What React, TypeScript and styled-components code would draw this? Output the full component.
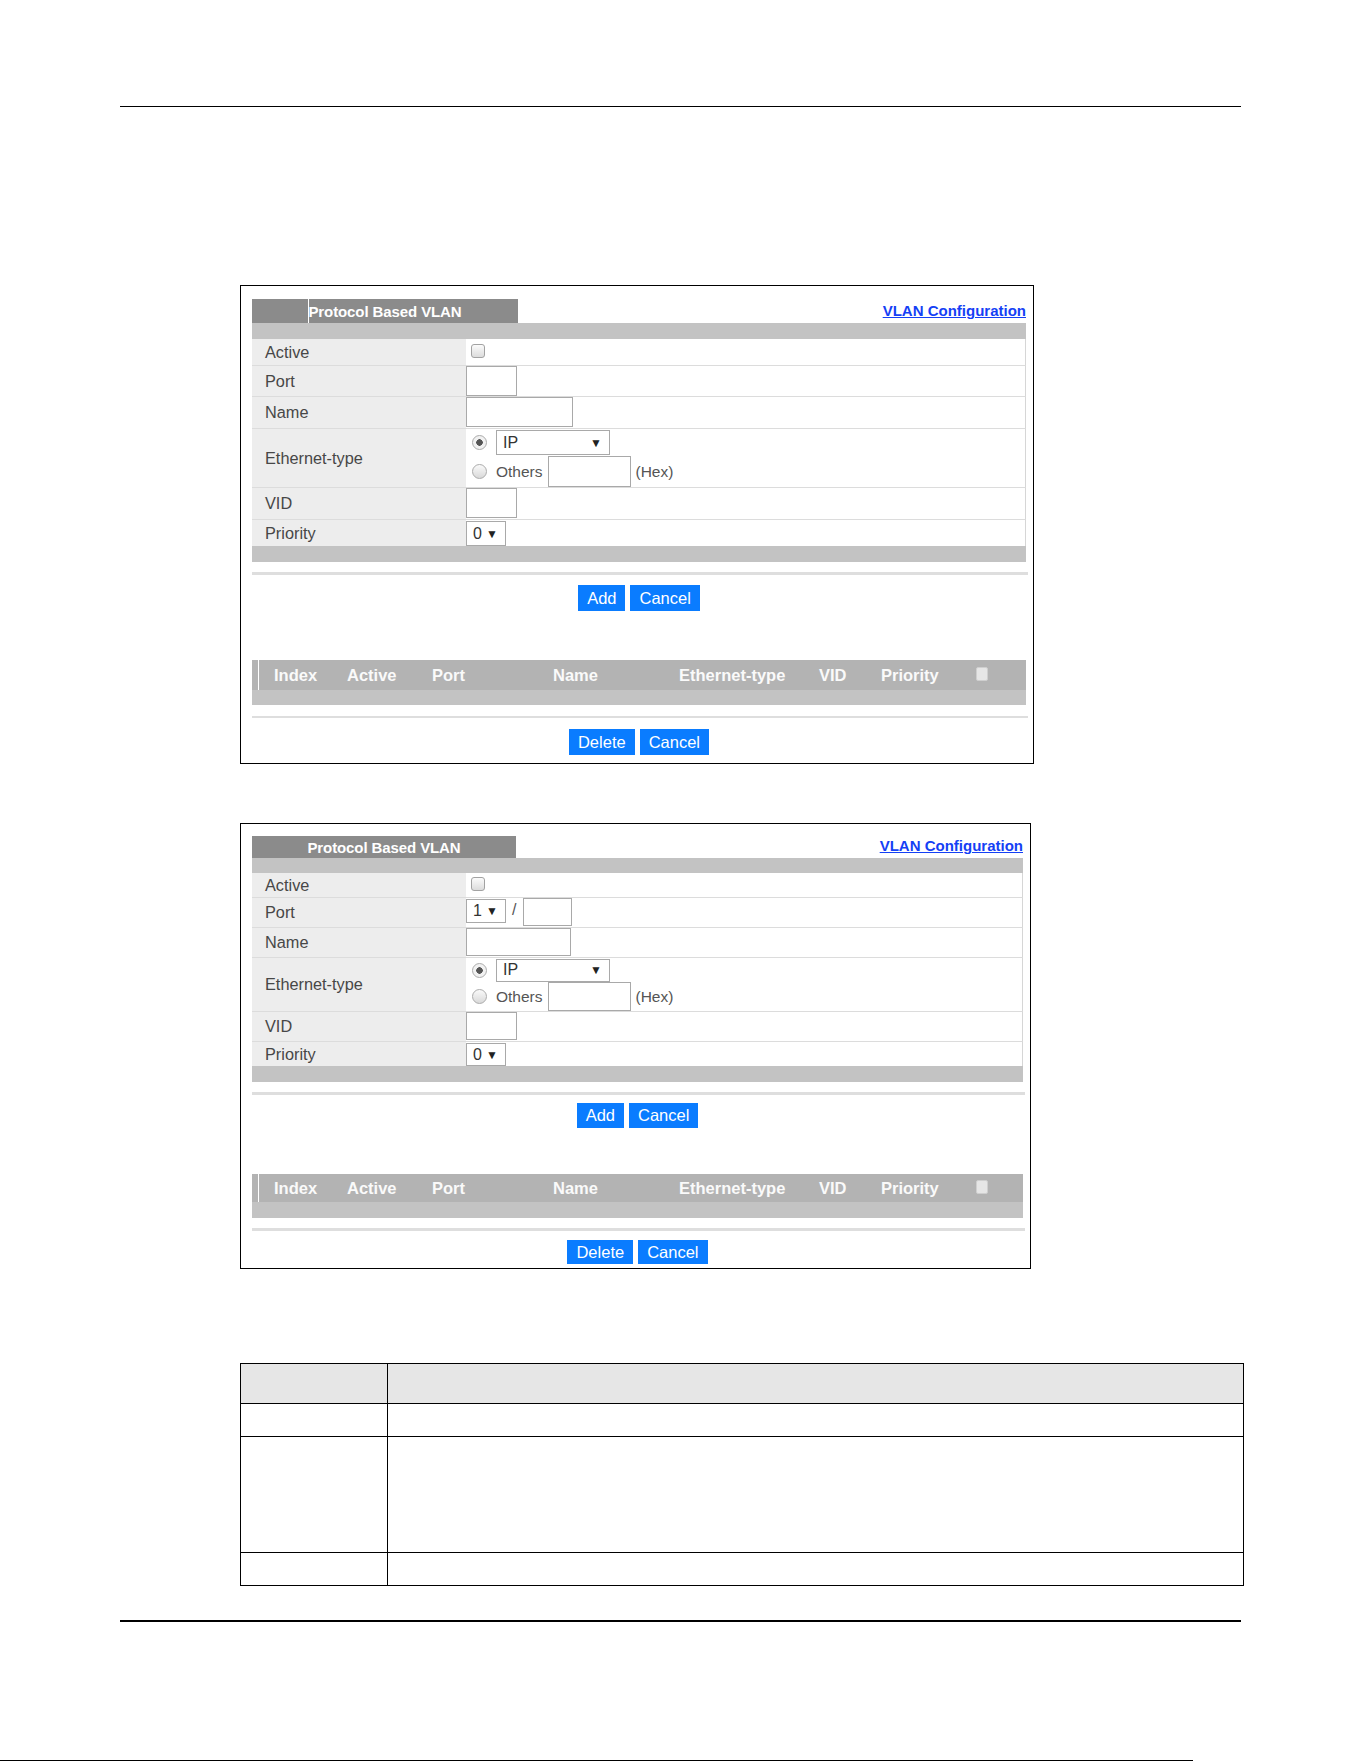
import React from 'react';
import styled, { createGlobalStyle } from 'styled-components';

const GlobalStyle = createGlobalStyle`
  html, body {
    margin: 0;
    padding: 0;
    background: #fff;
  }
  body {
    font-family: "Liberation Sans", Arial, sans-serif;
    color: #3a3a3a;
  }
`;

type PanelConfig = {
  width: number;
  mt: number;
  padTop: number;
  bottomPad: number;
  tabW: number;
  tabH: number;
  marker: boolean;
  barH: number;
  rows: number[];
  ethLines: [number, number];
  inH: number;
  selH: number;
  endBarH: number;
  sepGap: number;
  btnTop: number;
  btnH: number;
  listGap: number;
  headH: number;
  emptyH: number;
  sep2Gap: number;
  sep2H: number;
  btn2Gap: number;
  btn2H: number;
  portSelect: boolean;
};

const panelA: PanelConfig = {
  width: 794,
  mt: 178,
  padTop: 13,
  bottomPad: 8,
  tabW: 266,
  tabH: 24,
  marker: true,
  barH: 16,
  rows: [26, 31, 32, 59, 32, 27],
  ethLines: [27, 31],
  inH: 30,
  selH: 25,
  endBarH: 16,
  sepGap: 10,
  btnTop: 10,
  btnH: 26,
  listGap: 49,
  headH: 30,
  emptyH: 15,
  sep2Gap: 11,
  sep2H: 2,
  btn2Gap: 11,
  btn2H: 26,
  portSelect: false,
};

const panelB: PanelConfig = {
  width: 791,
  mt: 59,
  padTop: 12,
  bottomPad: 4,
  tabW: 264,
  tabH: 22,
  marker: false,
  barH: 15,
  rows: [24, 30, 30, 54, 30, 25],
  ethLines: [24, 29],
  inH: 28,
  selH: 23,
  endBarH: 16,
  sepGap: 10,
  btnTop: 8,
  btnH: 25,
  listGap: 46,
  headH: 28,
  emptyH: 16,
  sep2Gap: 10,
  sep2H: 3,
  btn2Gap: 9,
  btn2H: 24,
  portSelect: true,
};

const listColumns: { label: string; w: number }[] = [
  { label: 'Index', w: 73 },
  { label: 'Active', w: 85 },
  { label: 'Port', w: 121 },
  { label: 'Name', w: 126 },
  { label: 'Ethernet-type', w: 140 },
  { label: 'VID', w: 62 },
  { label: 'Priority', w: 95 },
];

function Panel({ c }: { c: PanelConfig }) {
  return (
    <PanelBox $w={c.width} $mt={c.mt} $pt={c.padTop} $pb={c.bottomPad}>
      <PanelHead $h={c.tabH}>
        <Tab $w={c.tabW} $marker={c.marker}>
          Protocol Based VLAN
        </Tab>
        <ConfigLink href="#">VLAN Configuration</ConfigLink>
      </PanelHead>
      <Bar $h={c.barH} />
      <FormRow $h={c.rows[0]} $first>
        <Label>Active</Label>
        <Value>
          <CheckBox />
        </Value>
      </FormRow>
      <FormRow $h={c.rows[1]}>
        <Label>Port</Label>
        <Value $top>
          {c.portSelect ? (
            <>
              <SelectBox $w={40} $h={c.selH + 1} $mt={1}>
                <span>1</span>
                <Arrow>▼</Arrow>
              </SelectBox>
              <Slash>/</Slash>
              <TextInput $w={49} $h={c.inH} readOnly />
            </>
          ) : (
            <TextInput $w={51} $h={c.inH} readOnly />
          )}
        </Value>
      </FormRow>
      <FormRow $h={c.rows[2]}>
        <Label>Name</Label>
        <Value $top>
          <TextInput $w={c.portSelect ? 105 : 107} $h={c.inH} readOnly />
        </Value>
      </FormRow>
      <FormRow $h={c.rows[3]}>
        <Label>Ethernet-type</Label>
        <EthValue>
          <EthLine $h={c.ethLines[0]}>
            <Radio $checked />
            <SelectBox $w={114} $h={c.selH} $mt={0}>
              <span>IP</span>
              <Arrow>▼</Arrow>
            </SelectBox>
          </EthLine>
          <EthLine $h={c.ethLines[1]}>
            <Radio />
            <Hint>Others</Hint>
            <TextInput $w={83} $h={c.ethLines[1]} readOnly />
            <Hint>(Hex)</Hint>
          </EthLine>
        </EthValue>
      </FormRow>
      <FormRow $h={c.rows[4]}>
        <Label>VID</Label>
        <Value $top>
          <TextInput $w={51} $h={c.inH} readOnly />
        </Value>
      </FormRow>
      <FormRow $h={c.rows[5]}>
        <Label>Priority</Label>
        <Value $top>
          <SelectBox $w={40} $h={c.selH} $mt={1}>
            <span>0</span>
            <Arrow>▼</Arrow>
          </SelectBox>
        </Value>
      </FormRow>
      <Bar $h={c.endBarH} />
      <Separator $mt={c.sepGap} $h={3} />
      <ButtonRow $mt={c.btnTop}>
        <Btn $h={c.btnH}>Add</Btn>
        <Btn $h={c.btnH}>Cancel</Btn>
      </ButtonRow>
      <ListHead $mt={c.listGap} $h={c.headH}>
        <Edge />
        {listColumns.map(col => (
          <ListCol key={col.label} $w={col.w}>
            {col.label}
          </ListCol>
        ))}
        <HeadCheck />
      </ListHead>
      <Bar $h={c.emptyH} />
      <Separator $mt={c.sep2Gap} $h={c.sep2H} />
      <ButtonRow $mt={c.btn2Gap}>
        <Btn $h={c.btn2H}>Delete</Btn>
        <Btn $h={c.btn2H}>Cancel</Btn>
      </ButtonRow>
    </PanelBox>
  );
}

export default function App() {
  return (
    <Page>
      <GlobalStyle />
      <Rule $h={1} $mt={0} />
      <Panel c={panelA} />
      <Panel c={panelB} />
      <DescTable>
        <DescCell $head />
        <DescCell $head />
        <DescCell />
        <DescCell />
        <DescCell />
        <DescCell />
        <DescCell />
        <DescCell />
      </DescTable>
      <Rule $h={2} $mt={34} />
      <EdgeLine />
    </Page>
  );
}

const Page = styled.div`
  width: 1361px;
  height: 1761px;
  padding-top: 106px;
  box-sizing: border-box;
  display: flex;
  flex-direction: column;
  overflow: hidden;
`;

const Rule = styled.div<{ $h: number; $mt: number }>`
  margin: ${p => p.$mt}px 0 0 120px;
  width: 1121px;
  height: ${p => p.$h}px;
  background: #000;
  flex-shrink: 0;
`;

const EdgeLine = styled.div`
  margin-top: 138px;
  width: 1193px;
  height: 1px;
  background: #000;
  flex-shrink: 0;
`;

const PanelBox = styled.section<{ $w: number; $mt: number; $pt: number; $pb: number }>`
  margin: ${p => p.$mt}px 0 0 240px;
  width: ${p => p.$w}px;
  box-sizing: border-box;
  border: 1px solid #000;
  padding: ${p => p.$pt}px 7px ${p => p.$pb}px 11px;
  display: flex;
  flex-direction: column;
  flex-shrink: 0;
`;

const PanelHead = styled.div<{ $h: number }>`
  height: ${p => p.$h}px;
  display: flex;
  justify-content: space-between;
  align-items: flex-end;
`;

const Tab = styled.div<{ $w: number; $marker: boolean }>`
  position: relative;
  width: ${p => p.$w}px;
  height: 100%;
  background: #8b8b8b;
  color: #fff;
  font-weight: bold;
  font-size: 15px;
  display: flex;
  align-items: center;
  justify-content: center;
  letter-spacing: -0.1px;

  &::before {
    content: '';
    display: ${p => (p.$marker ? 'block' : 'none')};
    position: absolute;
    left: 56px;
    top: 0;
    bottom: 0;
    width: 1px;
    background: #fff;
  }
`;

const ConfigLink = styled.a`
  color: #1440f5;
  font-weight: bold;
  font-size: 15px;
  line-height: 17px;
  margin-bottom: 4px;
  text-decoration: underline;
`;

const Bar = styled.div<{ $h: number }>`
  height: ${p => p.$h}px;
  background: #c3c3c3;
`;

const FormRow = styled.div<{ $h: number; $first?: boolean }>`
  height: ${p => p.$h}px;
  box-sizing: border-box;
  display: grid;
  grid-template-columns: 214px 1fr;
  border-top: ${p => (p.$first ? 'none' : '1px solid #dcdcdc')};
  border-right: 1px solid #d6d6d6;
`;

const Label = styled.div`
  background: #ededed;
  display: flex;
  align-items: center;
  padding-left: 13px;
  font-size: 16.3px;
  color: #474747;
`;

const Value = styled.div<{ $top?: boolean }>`
  display: flex;
  align-items: ${p => (p.$top ? 'flex-start' : 'center')};
  padding-left: ${p => (p.$top ? 0 : 5)}px;
`;

const EthValue = styled.div`
  display: flex;
  flex-direction: column;
  padding-left: 6px;
`;

const EthLine = styled.div<{ $h: number }>`
  height: ${p => p.$h}px;
  display: flex;
  align-items: center;
  gap: 5px;
`;

const TextInput = styled.input<{ $w: number; $h: number }>`
  width: ${p => p.$w}px;
  height: ${p => p.$h}px;
  box-sizing: border-box;
  border: 1px solid #a9a9a9;
  border-radius: 0;
  padding: 0;
  margin: 0;
  background: #fff;
  outline: none;
`;

const SelectBox = styled.div<{ $w: number; $h: number; $mt: number }>`
  width: ${p => p.$w}px;
  height: ${p => p.$h}px;
  margin-top: ${p => p.$mt}px;
  box-sizing: border-box;
  border: 1px solid #a9a9a9;
  display: flex;
  align-items: center;
  justify-content: space-between;
  padding: 0 7px 0 6px;
  font-size: 16px;
  color: #333;
  background: #fff;
`;

const Arrow = styled.span`
  font-size: 12px;
  color: #222;
`;

const Slash = styled.span`
  font-size: 16px;
  color: #555;
  margin: 3px 7px 0 6px;
`;

const CheckBox = styled.span`
  width: 14px;
  height: 14px;
  box-sizing: border-box;
  border: 1px solid #a2a2a2;
  border-radius: 3px;
  background: linear-gradient(#fbfbfb, #dcdcdc);
  margin-top: -3px;
`;

const Radio = styled.span<{ $checked?: boolean }>`
  width: 15px;
  height: 15px;
  box-sizing: border-box;
  border-radius: 50%;
  border: 1px solid #ababab;
  background: ${p =>
    p.$checked
      ? 'radial-gradient(circle, #555 0 3px, #f1f1f1 3.5px)'
      : 'linear-gradient(#fafafa, #d9d9d9)'};
  margin-right: 4px;
`;

const Hint = styled.span`
  font-size: 15.5px;
  color: #555;
`;

const Separator = styled.div<{ $mt: number; $h: number }>`
  margin-top: ${p => p.$mt}px;
  height: ${p => p.$h}px;
  background: #dedede;
  margin-right: -2px;
`;

const ButtonRow = styled.div<{ $mt: number }>`
  margin-top: ${p => p.$mt}px;
  display: flex;
  justify-content: center;
  gap: 5px;
`;

const Btn = styled.button<{ $h: number }>`
  height: ${p => p.$h}px;
  padding: 0 9px;
  border: none;
  border-radius: 0;
  background: #0a7cff;
  color: #fff;
  font-family: "Liberation Sans", Arial, sans-serif;
  font-size: 16.5px;
  cursor: pointer;
`;

const ListHead = styled.div<{ $mt: number; $h: number }>`
  margin-top: ${p => p.$mt}px;
  height: ${p => p.$h}px;
  background: #b3b3b3;
  display: flex;
  align-items: center;
  padding-left: 6px;
  color: #fafafa;
  font-weight: bold;
  font-size: 16.5px;
`;

const Edge = styled.span`
  align-self: stretch;
  width: 1px;
  background: #fff;
  margin-right: 15px;
`;

const ListCol = styled.span<{ $w: number }>`
  width: ${p => p.$w}px;
  flex-shrink: 0;
`;

const HeadCheck = styled.span`
  width: 12px;
  height: 14px;
  box-sizing: border-box;
  border: 1px solid #cfcfcf;
  border-radius: 2px;
  background: #e6e6e6;
  margin-top: -3px;
`;

const DescTable = styled.div`
  margin: 94px 0 0 240px;
  width: 1004px;
  box-sizing: border-box;
  border-top: 1px solid #000;
  border-left: 1px solid #000;
  display: grid;
  grid-template-columns: 147px 1fr;
  grid-template-rows: 40px 33px 116px 33px;
  flex-shrink: 0;
`;

const DescCell = styled.div<{ $head?: boolean }>`
  box-sizing: border-box;
  background: ${p => (p.$head ? '#e6e6e6' : '#fff')};
  border-right: 1px solid #000;
  border-bottom: 1px solid #000;
`;
